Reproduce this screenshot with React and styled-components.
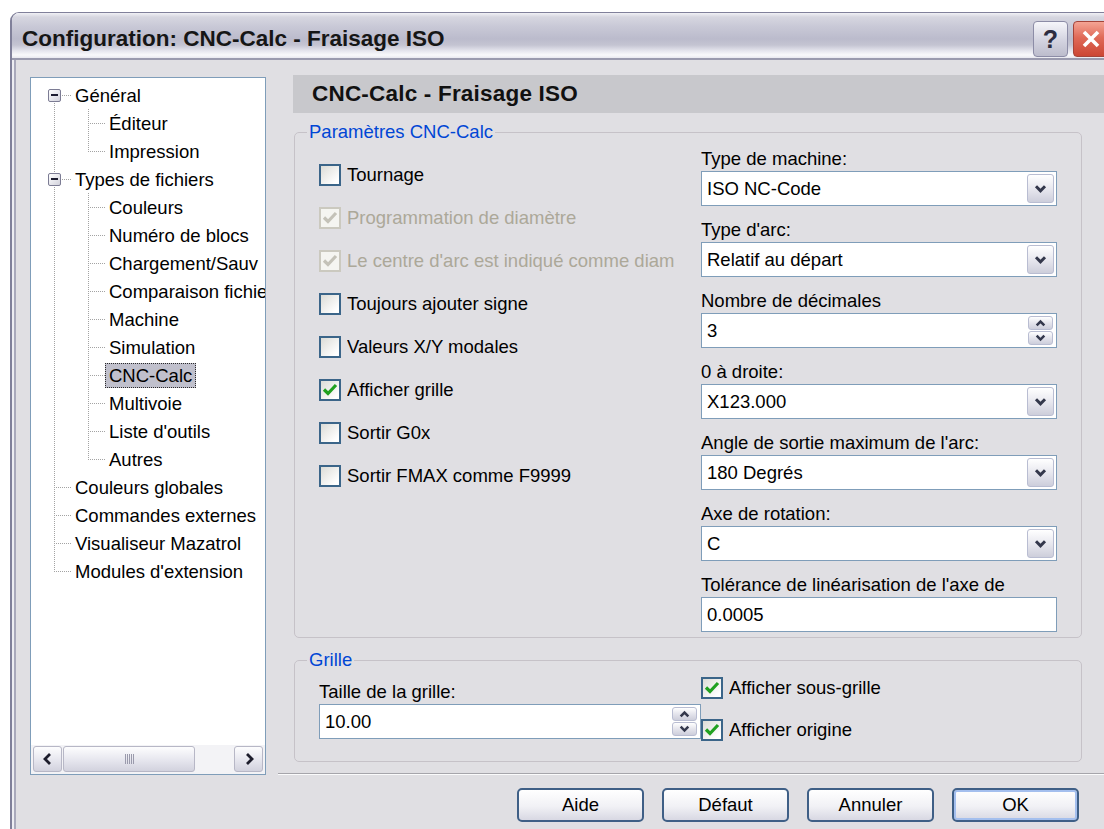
import React from "react";
import styled, { createGlobalStyle } from "styled-components";

const GlobalStyle = createGlobalStyle`
  html, body {
    margin: 0;
    padding: 0;
    background: #ffffff;
    overflow: hidden;
  }
  body {
    font-family: "Liberation Sans", Arial, sans-serif;
    font-size: 18.5px;
    color: #000;
  }
`;

const dotV = "repeating-linear-gradient(to bottom, #a3a3a3 0 1px, transparent 1px 2px)";
const dotH = "repeating-linear-gradient(to right, #a3a3a3 0 1px, transparent 1px 2px)";

const Window = styled.div`
  margin: 12px 0 0 10px;
  width: 1114px;
  height: 840px;
  box-sizing: border-box;
  display: flex;
  flex-direction: column;
  border: 2px solid #80809a;
  border-top-width: 1px;
  border-radius: 9px 9px 0 0;
  overflow: hidden;
`;

const TitleBar = styled.div`
  flex: none;
  height: 47px;
  box-sizing: border-box;
  display: flex;
  align-items: center;
  padding: 7px 14px 0 10px;
  border-bottom: 2px solid #9a9aae;
  background: linear-gradient(
    to bottom,
    #f0f0f5 0px,
    #d6d6e0 4px,
    #c8c8d6 14px,
    #bbbbcc 26px,
    #c4c4d2 32px,
    #e6e6ee 38px,
    #f9f9fb 42px,
    #e8e8ef 45px
  );
`;

const TitleText = styled.div`
  flex: 1;
  font-size: 22.5px;
  font-weight: bold;
  color: #161616;
  white-space: nowrap;
`;

const CaptionButtons = styled.div`
  display: flex;
  gap: 5px;
`;

const CaptionButton = styled.div`
  width: 35px;
  height: 36px;
  box-sizing: border-box;
  border-radius: 4px;
  display: flex;
  align-items: center;
  justify-content: center;
  border: 1px solid ${({ $close }) => ($close ? "#a4443a" : "#8c8ca6")};
  background: ${({ $close }) =>
    $close
      ? "linear-gradient(to bottom, #f4a494, #e06a58 45%, #cc4634)"
      : "linear-gradient(to bottom, #f6f6fa, #d6d6e2 50%, #bcbccc)"};
  color: #2c2c40;
  font-size: 25px;
  font-weight: bold;
`;

const Body = styled.div`
  flex: 1;
  display: flex;
  background: #e0dfe3;
  border-left: 2px solid #ededf2;
  box-shadow: inset 2px 0 0 #a9a9bb;
  padding: 15px 0 0 16px;
`;

/* ---------- tree ---------- */

const Tree = styled.div`
  flex: none;
  margin-top: 2px;
  width: 236px;
  height: 698px;
  box-sizing: border-box;
  border: 1px solid #7f9db9;
  background: #fff;
  display: flex;
  flex-direction: column;
`;

const TreeRows = styled.div`
  flex: 1;
  padding: 3px 0 0 6px;
  overflow: hidden;
`;

const TreeRow = styled.div`
  display: flex;
  align-items: center;
  height: 28px;
  white-space: nowrap;
`;

const Guide = styled.span`
  flex: none;
  width: 34px;
  height: 100%;
  background: ${({ $line }) => ($line ? `${dotV} 17px 0 / 1px 100% no-repeat` : "none")};
`;

const connectorBg = ({ $up, $down }) => {
  const layers = [`${dotH} 17px 14px / 17px 1px no-repeat`];
  if ($up) layers.push(`${dotV} 17px 0 / 1px 14px no-repeat`);
  if ($down) layers.push(`${dotV} 17px 14px / 1px 14px no-repeat`);
  return layers.join(", ");
};

const Connector = styled.span`
  flex: none;
  width: 34px;
  height: 100%;
  display: flex;
  align-items: center;
  background: ${connectorBg};
`;

const ExpandBox = styled.span`
  margin-left: 11px;
  width: 13px;
  height: 13px;
  box-sizing: border-box;
  border: 1px solid #7c7c94;
  border-radius: 2px;
  background: linear-gradient(135deg, #ffffff, #d2d2dc);
  display: flex;
  align-items: center;
  justify-content: center;
  &::after {
    content: "";
    width: 7px;
    height: 2px;
    background: #1c1c30;
  }
`;

const TreeLabel = styled.span`
  padding: 0 3px;
  line-height: 23px;
  border: 1px dotted ${({ $selected }) => ($selected ? "#2a2a2a" : "transparent")};
  background: ${({ $selected }) => ($selected ? "#c0c0cc" : "transparent")};
`;

const HScroll = styled.div`
  flex: none;
  height: 29px;
  box-sizing: border-box;
  padding: 1px 2px 2px;
  display: flex;
  gap: 1px;
  background: #f3f3f6;
`;

const ScrollButton = styled.div`
  width: 29px;
  box-sizing: border-box;
  border: 1px solid #b7b7c6;
  border-radius: 3px;
  background: linear-gradient(to bottom, #fdfdfe, #e6e6ee 55%, #d2d2de);
  display: flex;
  align-items: center;
  justify-content: center;
`;

const ScrollThumb = styled(ScrollButton)`
  width: 132px;
`;

const ScrollTrack = styled.div`
  flex: 1;
`;

/* ---------- right side ---------- */

const Main = styled.div`
  flex: 1;
  margin-left: 12px;
  display: flex;
  flex-direction: column;
`;

const PageHeader = styled.div`
  margin-left: 15px;
  height: 38px;
  padding-left: 19px;
  display: flex;
  align-items: center;
  background: #c8c8cc;
  font-size: 22.5px;
  font-weight: bold;
  letter-spacing: 0.2px;
  color: #111;
`;

const GroupBox = styled.fieldset`
  margin: ${({ $top }) => $top}px 0 0 16px;
  width: 788px;
  min-width: 0;
  box-sizing: border-box;
  padding: 0 24px ${({ $bottom }) => $bottom}px 12px;
  border: 1px solid #c6c2c8;
  border-radius: 5px;
`;

const Legend = styled.legend`
  padding: 0 2px;
  line-height: 20px;
  color: #0046d5;
`;

const GroupGrid = styled.div`
  display: grid;
  grid-template-columns: minmax(0, 1fr) 356px;
`;

const Column = styled.div`
  min-width: 0;
  display: flex;
  flex-direction: column;
  gap: ${({ $gap }) => $gap}px;
  padding: ${({ $top }) => $top}px ${({ $right }) => $right || 0}px 0 ${({ $left }) => $left || 0}px;
`;

const CheckRow = styled.div`
  display: flex;
  align-items: center;
  gap: 6px;
  height: 22px;
  color: ${({ $disabled }) => ($disabled ? "#aca899" : "#000")};
`;

const CheckText = styled.span`
  min-width: 0;
  white-space: nowrap;
  overflow: hidden;
`;

const CheckBox = styled.span`
  flex: none;
  width: 22px;
  height: 22px;
  box-sizing: border-box;
  border: 2px solid ${({ $disabled }) => ($disabled ? "#cbc9bf" : "#3b6589")};
  background: ${({ $disabled }) =>
    $disabled ? "#f5f5f1" : "linear-gradient(135deg, #dcdcd7, #ffffff 85%)"};
  display: flex;
  align-items: center;
  justify-content: center;
`;

const Field = styled.div`
  display: flex;
  flex-direction: column;
`;

const FieldLabel = styled.div`
  height: 25px;
  line-height: 25px;
  white-space: nowrap;
  overflow: hidden;
`;

const InputBox = styled.div`
  height: 35px;
  box-sizing: border-box;
  border: 1px solid #7f9db9;
  background: #fff;
  display: flex;
  align-items: center;
  padding-left: 5px;
`;

const InputValue = styled.span`
  flex: 1;
`;

const DropButton = styled.span`
  align-self: stretch;
  margin: 2px;
  width: 27px;
  box-sizing: border-box;
  border: 1px solid #b9bdd2;
  border-radius: 3px;
  background: linear-gradient(to bottom, #ffffff, #e8e8ef 50%, #cdcedb);
  display: flex;
  align-items: center;
  justify-content: center;
`;

const SpinButtons = styled.span`
  align-self: stretch;
  margin: 2px 3px 2px 2px;
  width: 25px;
  display: flex;
  flex-direction: column;
  gap: 1px;
`;

const SpinButton = styled.span`
  flex: 1;
  box-sizing: border-box;
  border: 1px solid #b9bdd2;
  border-radius: 3px;
  background: linear-gradient(to bottom, #ffffff, #e4e4ec 50%, #cdcedb);
  display: flex;
  align-items: center;
  justify-content: center;
`;

const Separator = styled.div`
  margin-top: 11px;
  border-top: 1px solid #a6a5ab;
  border-bottom: 1px solid #fbfbfc;
`;

const ButtonRow = styled.div`
  display: flex;
  gap: 18px;
  margin-top: 13px;
  padding-left: 239px;
`;

const DialogButton = styled.div`
  width: 127px;
  height: 34px;
  box-sizing: border-box;
  border: 2px solid #3f5f86;
  border-radius: 5px;
  background: linear-gradient(to bottom, #ffffff, #f1f1f5 55%, #d8d8e3);
  box-shadow: ${({ $default }) => ($default ? "inset 0 0 0 2px #a4bfee" : "none")};
  display: flex;
  align-items: center;
  justify-content: center;
`;

/* ---------- drawings ---------- */

const Chevron = ({ up, small }) => (
  <svg width={small ? 11 : 13} height="8" viewBox="0 0 13 8">
    <path
      d={up ? "M2 6.8 L6.5 2.3 L11 6.8" : "M2 1.3 L6.5 5.8 L11 1.3"}
      fill="none"
      stroke="#34384c"
      strokeWidth="3"
    />
  </svg>
);

const SideArrow = ({ right }) => (
  <svg width="10" height="14" viewBox="0 0 10 14">
    <path
      d={right ? "M3 2 L8 7 L3 12" : "M7 2 L2 7 L7 12"}
      fill="none"
      stroke="#1d1d2c"
      strokeWidth="2.8"
    />
  </svg>
);

const Grip = () => (
  <svg width="9" height="10" viewBox="0 0 9 10">
    {[0.5, 2.5, 4.5, 6.5, 8.5].map((x) => (
      <line key={x} x1={x} y1="0" x2={x} y2="10" stroke="#9a9aac" strokeWidth="1" />
    ))}
  </svg>
);

const Tick = ({ disabled }) => (
  <svg width="18" height="18" viewBox="0 0 18 18">
    <path
      d="M3 8.5 L7 12.5 L15 4"
      fill="none"
      stroke={disabled ? "#c4c2b8" : "#21a121"}
      strokeWidth="3.2"
    />
  </svg>
);

const CloseCross = () => (
  <svg width="20" height="20" viewBox="0 0 20 20">
    <path d="M3 3 L17 17 M17 3 L3 17" stroke="#fff" strokeWidth="3.6" />
  </svg>
);

/* ---------- parts ---------- */

const Check = ({ label, checked, disabled }) => (
  <CheckRow $disabled={disabled}>
    <CheckBox $disabled={disabled}>{checked && <Tick disabled={disabled} />}</CheckBox>
    <CheckText>{label}</CheckText>
  </CheckRow>
);

const Combo = ({ label, value }) => (
  <Field>
    <FieldLabel>{label}</FieldLabel>
    <InputBox>
      <InputValue>{value}</InputValue>
      <DropButton>
        <Chevron />
      </DropButton>
    </InputBox>
  </Field>
);

const Spin = ({ label, value }) => (
  <Field>
    <FieldLabel>{label}</FieldLabel>
    <InputBox>
      <InputValue>{value}</InputValue>
      <SpinButtons>
        <SpinButton>
          <Chevron up small />
        </SpinButton>
        <SpinButton>
          <Chevron small />
        </SpinButton>
      </SpinButtons>
    </InputBox>
  </Field>
);

const TextField = ({ label, value }) => (
  <Field>
    <FieldLabel>{label}</FieldLabel>
    <InputBox>
      <InputValue>{value}</InputValue>
    </InputBox>
  </Field>
);

// the tree is narrower than its longest entries, which it clips
const treeItems = [
  { label: "Général", level: 0, open: true, first: true },
  { label: "Éditeur", level: 1 },
  { label: "Impression", level: 1, last: true },
  { label: "Types de fichiers", level: 0, open: true },
  { label: "Couleurs", level: 1 },
  { label: "Numéro de blocs", level: 1 },
  { label: "Chargement/Sauv", level: 1 },
  { label: "Comparaison fichie", level: 1 },
  { label: "Machine", level: 1 },
  { label: "Simulation", level: 1 },
  { label: "CNC-Calc", level: 1, selected: true },
  { label: "Multivoie", level: 1 },
  { label: "Liste d'outils", level: 1 },
  { label: "Autres", level: 1, last: true },
  { label: "Couleurs globales", level: 0 },
  { label: "Commandes externes", level: 0 },
  { label: "Visualiseur Mazatrol", level: 0 },
  { label: "Modules d'extension", level: 0, last: true },
];

const options = [
  { label: "Tournage" },
  { label: "Programmation de diamètre", checked: true, disabled: true },
  { label: "Le centre d'arc est indiqué comme diam", checked: true, disabled: true },
  { label: "Toujours ajouter signe" },
  { label: "Valeurs X/Y modales" },
  { label: "Afficher grille", checked: true },
  { label: "Sortir G0x" },
  { label: "Sortir FMAX comme F9999" },
];

export default function App() {
  return (
    <>
      <GlobalStyle />
      <Window>
        <TitleBar>
          <TitleText>Configuration: CNC-Calc - Fraisage ISO</TitleText>
          <CaptionButtons>
            <CaptionButton>?</CaptionButton>
            <CaptionButton $close>
              <CloseCross />
            </CaptionButton>
          </CaptionButtons>
        </TitleBar>

        <Body>
          <Tree>
            <TreeRows>
              {treeItems.map((item) => (
                <TreeRow key={item.label}>
                  {item.level === 1 && <Guide $line />}
                  <Connector $up={!item.first} $down={!item.last}>
                    {item.open && <ExpandBox />}
                  </Connector>
                  <TreeLabel $selected={item.selected}>{item.label}</TreeLabel>
                </TreeRow>
              ))}
            </TreeRows>
            <HScroll>
              <ScrollButton>
                <SideArrow />
              </ScrollButton>
              <ScrollThumb>
                <Grip />
              </ScrollThumb>
              <ScrollTrack />
              <ScrollButton>
                <SideArrow right />
              </ScrollButton>
            </HScroll>
          </Tree>

          <Main>
            <PageHeader>CNC-Calc - Fraisage ISO</PageHeader>

            <GroupBox $top={9} $bottom={5}>
              <Legend>Paramètres CNC-Calc</Legend>
              <GroupGrid>
                <Column $gap={21} $top={22} $left={12} $right={25}>
                  {options.map((o) => (
                    <Check key={o.label} {...o} />
                  ))}
                </Column>
                <Column $gap={11} $top={4}>
                  <Combo label="Type de machine:" value="ISO NC-Code" />
                  <Combo label="Type d'arc:" value="Relatif au départ" />
                  <Spin label="Nombre de décimales" value="3" />
                  <Combo label="0 à droite:" value="X123.000" />
                  <Combo label="Angle de sortie maximum de l'arc:" value="180 Degrés" />
                  <Combo label="Axe de rotation:" value="C" />
                  <TextField label="Tolérance de linéarisation de l'axe de" value="0.0005" />
                </Column>
              </GroupGrid>
            </GroupBox>

            <GroupBox $top={12} $bottom={20}>
              <Legend>Grille</Legend>
              <GroupGrid>
                <Column $gap={0} $top={9} $left={12}>
                  <Spin label="Taille de la grille:" value="10.00" />
                </Column>
                <Column $gap={20} $top={7}>
                  <Check label="Afficher sous-grille" checked />
                  <Check label="Afficher origine" checked />
                </Column>
              </GroupGrid>
            </GroupBox>

            <Separator />

            <ButtonRow>
              <DialogButton>Aide</DialogButton>
              <DialogButton>Défaut</DialogButton>
              <DialogButton>Annuler</DialogButton>
              <DialogButton $default>OK</DialogButton>
            </ButtonRow>
          </Main>
        </Body>
      </Window>
    </>
  );
}
